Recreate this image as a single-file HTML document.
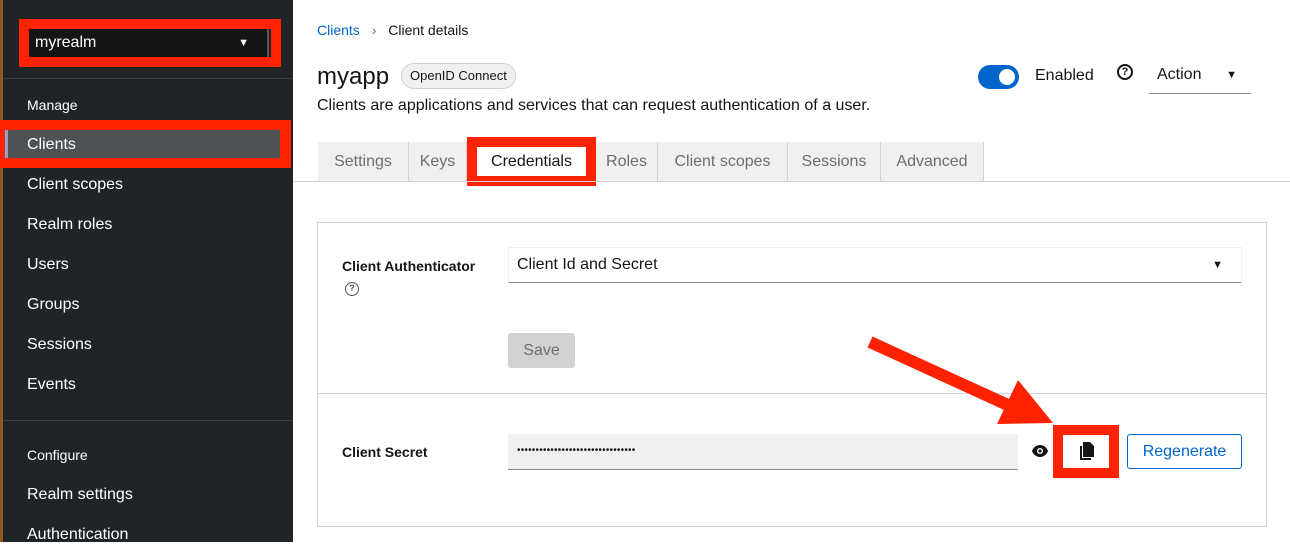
<!DOCTYPE html>
<html><head><style>
*{box-sizing:border-box;margin:0;padding:0}
body{width:1290px;height:542px;overflow:hidden;font-family:"Liberation Sans",sans-serif;background:#fff;position:relative;color:#151515}
.sb{position:absolute;left:0;top:0;width:293px;height:542px;background:#212427}
.a{position:absolute}
.nav{position:absolute;left:27px;color:#fff;font-size:16px}
.tab{position:absolute;top:142px;height:39px;background:#f0f0f0;border-right:1px solid #d2d2d2;font-size:16px;color:#6a6e73;text-align:center;line-height:39px}
</style></head><body>
<div class="sb">
  <div class="a" style="left:0;top:0;width:3px;height:542px;background:#8a5a1a"></div>
  <div class="a" style="left:19px;top:19px;width:262px;height:48px;border:10px solid #ff2200"></div>
  <div class="a" style="left:29px;top:29px;width:240px;height:28px;background:#151515;color:#fff;font-size:16px;line-height:28px;padding-left:6px;border-right:2px solid #555">myrealm<span style="position:absolute;right:18px;top:0;font-size:11px">▼</span></div>
  <div class="a" style="left:3px;top:78px;width:290px;height:1px;background:#3c3f42"></div>
  <div class="nav" style="top:97px;font-size:14px">Manage</div>
  <div class="a" style="left:0;top:120px;width:291px;height:48px;background:#ff2200"></div>
  <div class="a" style="left:5px;top:130px;width:275px;height:28px;background:#4f5255;border-left:3px solid #8fa2c8"></div>
  <div class="nav" style="top:136px">Clients</div>
  <div class="nav" style="top:176px">Client scopes</div>
  <div class="nav" style="top:216px">Realm roles</div>
  <div class="nav" style="top:256px">Users</div>
  <div class="nav" style="top:296px">Groups</div>
  <div class="nav" style="top:336px">Sessions</div>
  <div class="nav" style="top:376px">Events</div>
  <div class="a" style="left:3px;top:420px;width:290px;height:1px;background:#3c3f42"></div>
  <div class="nav" style="top:447px;font-size:14px">Configure</div>
  <div class="nav" style="top:486px">Realm settings</div>
  <div class="nav" style="top:526px">Authentication</div>
</div>
<div class="a" style="left:317px;top:22px;font-size:14px"><span style="color:#0066cc">Clients</span> <span style="color:#6a6e73;margin:0 8px">›</span> Client details</div>
<div class="a" style="left:317px;top:63px;font-size:24px">myapp</div>
<div class="a" style="left:401px;top:63px;height:26px;border:1px solid #d2d2d2;border-radius:13px;background:#f0f0f0;font-size:13px;line-height:24px;padding:0 8px">OpenID Connect</div>
<div class="a" style="left:317px;top:97px;font-size:16px">Clients are applications and services that can request authentication of a user.</div>
<div class="a" style="left:978px;top:65px;width:41px;height:24px;border-radius:12px;background:#0066cc"><div class="a" style="right:4px;top:4px;width:16px;height:16px;border-radius:8px;background:#fff"></div></div>
<div class="a" style="left:1035px;top:67px;font-size:16px">Enabled</div>
<div class="a" style="left:1117px;top:64px;width:16px;height:16px;border:2px solid #151515;border-radius:50%;font-size:11px;font-weight:bold;text-align:center;line-height:12px">?</div>
<div class="a" style="left:1149px;top:58px;width:102px;height:36px;border-bottom:1px solid #8a8d90;font-size:16px;line-height:34px;padding-left:8px">Action<span style="position:absolute;right:14px;font-size:11px">▼</span></div>
<div class="tab" style="left:318px;width:91px">Settings</div>
<div class="tab" style="left:409px;width:58px">Keys</div>
<div class="a" style="left:467px;top:137px;width:129px;height:49px;background:#ff2200"></div>
<div class="a" style="left:477px;top:147px;width:109px;height:29px;background:#fff;font-size:16px;text-align:center;line-height:29px">Credentials</div>
<div class="tab" style="left:596px;width:62px">Roles</div>
<div class="tab" style="left:658px;width:130px">Client scopes</div>
<div class="tab" style="left:788px;width:93px">Sessions</div>
<div class="tab" style="left:881px;width:103px">Advanced</div>
<div class="a" style="left:293px;top:181px;width:997px;height:1px;background:#d2d2d2"></div>
<div class="a" style="left:317px;top:222px;width:950px;height:305px;border:1px solid #d2d2d2"></div>
<div class="a" style="left:318px;top:393px;width:948px;height:1px;background:#d2d2d2"></div>
<div class="a" style="left:342px;top:258px;font-size:14px;font-weight:bold">Client Authenticator</div>
<div class="a" style="left:345px;top:282px;width:14px;height:14px;border:1.5px solid #555;border-radius:50%;font-size:9px;font-weight:bold;text-align:center;line-height:11px;color:#555">?</div>
<div class="a" style="left:508px;top:247px;width:734px;height:36px;border:1px solid #f0f0f0;border-bottom-color:#8a8d90;font-size:16px;line-height:34px;padding-left:8px">Client Id and Secret<span style="position:absolute;right:18px;font-size:11px">▼</span></div>
<div class="a" style="left:508px;top:333px;width:67px;height:35px;background:#d2d2d2;border-radius:3px;color:#6a6e73;font-size:16px;text-align:center;line-height:35px">Save</div>
<div class="a" style="left:342px;top:444px;font-size:14px;font-weight:bold">Client Secret</div>
<div class="a" style="left:508px;top:434px;width:510px;height:36px;background:#f0f0f0;border-bottom:1px solid #8a8d90;font-size:10px;line-height:34px;padding-left:9px;letter-spacing:0.2px">••••••••••••••••••••••••••••••••</div>
<svg class="a" style="left:1031px;top:444px" width="18" height="14" viewBox="0 0 18 14"><path d="M9 1C5 1 2 4 1 7c1 3 4 6 8 6s7-3 8-6c-1-3-4-6-8-6z" fill="#151515"/><circle cx="9" cy="7" r="3" fill="#fff"/><circle cx="9" cy="7" r="1.6" fill="#151515"/></svg>
<div class="a" style="left:1053px;top:425px;width:66px;height:53px;background:#ff2200"></div>
<div class="a" style="left:1063px;top:435px;width:46px;height:33px;background:#fff"></div>
<svg class="a" style="left:1079px;top:442px" width="16" height="18" viewBox="0 0 16 18"><path d="M4 0h7l4 4v11H4z" fill="#151515"/><path d="M1 4h2v12h9v2H1z" fill="#151515"/></svg>
<div class="a" style="left:1127px;top:434px;width:115px;height:35px;border:1px solid #0066cc;border-radius:3px;color:#0066cc;font-size:16px;text-align:center;line-height:33px">Regenerate</div>
<svg class="a" style="left:0;top:0" width="1290" height="542"><line x1="870" y1="342" x2="1010" y2="406" stroke="#ff2200" stroke-width="12"/><polygon points="997,424 1018,380 1053,423" fill="#ff2200"/></svg>
</body></html>
